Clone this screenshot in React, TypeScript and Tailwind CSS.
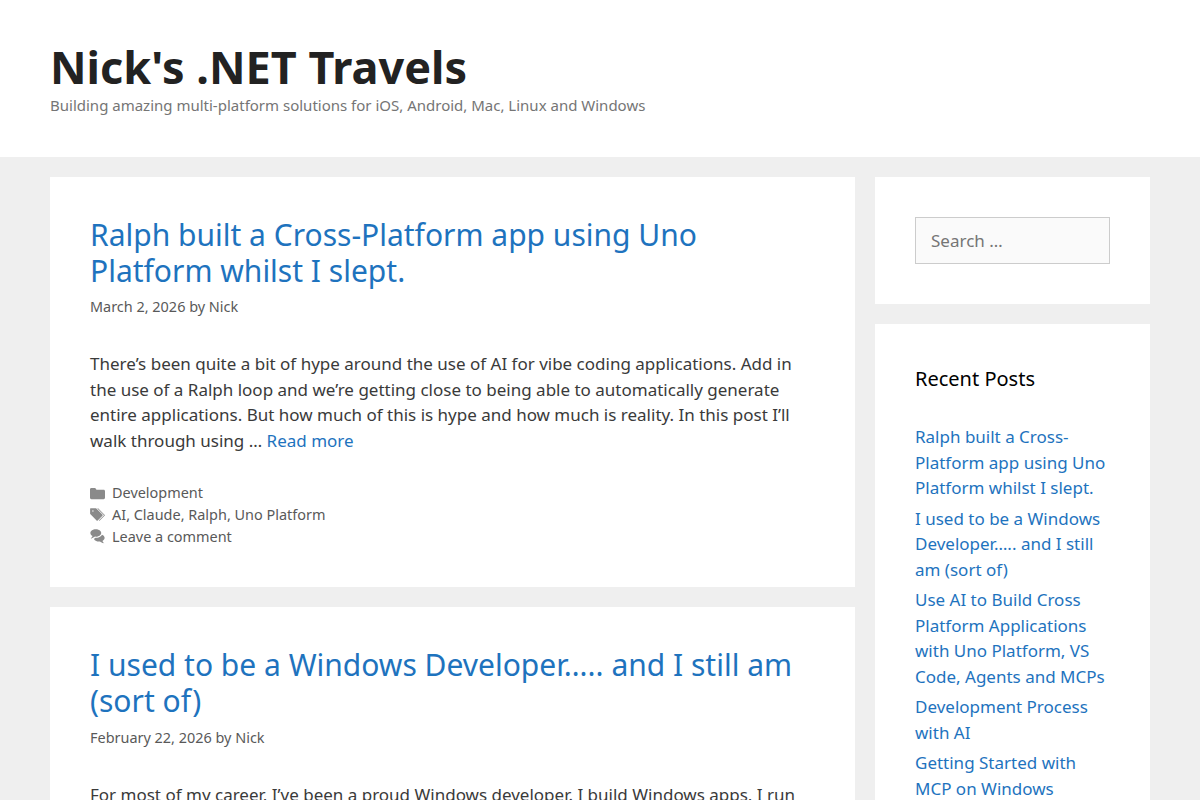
const recentPosts = [
  "Ralph built a Cross-Platform app using Uno Platform whilst I slept.",
  "I used to be a Windows Developer….. and I still am (sort of)",
  "Use AI to Build Cross Platform Applications with Uno Platform, VS Code, Agents and MCPs",
  "Development Process with AI",
  "Getting Started with MCP on Windows",
];

const icons: Record<string, string[]> = {
  folder: [
    "M0 112c0-26.51 21.49-48 48-48h110.014a48 48 0 0143.592 27.907l12.349 26.791A16 16 0 00228.486 128H464c26.51 0 48 21.49 48 48v224c0 26.51-21.49 48-48 48H48c-26.51 0-48-21.49-48-48V112z",
  ],
  tags: [
    "M20 39.5c-8.836 0-16 7.163-16 16v176c0 4.243 1.686 8.313 4.687 11.314l224 224c6.248 6.248 16.378 6.248 22.626 0l176-176c6.244-6.244 6.25-16.364.013-22.615l-223.5-224A15.999 15.999 0 00196.5 39.5H20zm56 96c0-13.255 10.745-24 24-24s24 10.745 24 24-10.745 24-24 24-24-10.745-24-24z",
    "M259.515 43.015c4.686-4.687 12.284-4.687 16.97 0l228 228c4.686 4.686 4.686 12.284 0 16.97l-180 180c-4.686 4.687-12.284 4.687-16.97 0-4.686-4.686-4.686-12.284 0-16.97L479.029 279.5 259.515 59.985c-4.686-4.686-4.686-12.284 0-16.97z",
  ],
  comments: [
    "M132.838 329.973a435.298 435.298 0 0016.769-9.004c13.363-7.574 26.587-16.142 37.419-25.507 7.544.597 15.27.925 23.098.925 54.905 0 105.634-15.311 143.285-41.28 23.728-16.365 43.115-37.692 54.155-62.645 54.739 22.205 91.498 63.272 91.498 110.286 0 42.186-29.558 79.498-75.09 102.828 23.46 49.216 75.09 101.709 75.09 101.709s-115.837-38.35-154.424-78.46c-9.956 1.12-20.297 1.758-30.793 1.758-88.727 0-162.927-43.071-181.007-100.61z",
    "M383.371 132.502c0 70.603-82.961 127.787-185.216 127.787-10.496 0-20.837-.639-30.793-1.757-38.587 40.093-154.424 78.429-154.424 78.429s51.63-52.472 75.09-101.67c-45.532-23.321-75.09-60.619-75.09-102.79C12.938 61.9 95.9 4.716 198.155 4.716 300.41 4.715 383.37 61.9 383.37 132.502z",
  ],
};

function MetaRow({ icon, links }: { icon: string; links: string[] }) {
  return (
    <div className="h-[21.675px]">
      <svg
        viewBox="0 0 512 512"
        fill="currentColor"
        className="inline-block size-[15px] mr-[7px] align-[-0.16em] opacity-70"
      >
        {icons[icon].map((d) => (
          <path key={d} d={d} fillRule="evenodd" />
        ))}
      </svg>
      {links.map((link, i) => (
        <span key={link}>
          {i > 0 && ", "}
          <a href="#">{link}</a>
        </span>
      ))}
    </div>
  );
}

type PostProps = {
  title: string;
  date: string;
  children: React.ReactNode;
  footer?: React.ReactNode;
};

function Post({ title, date, children, footer }: PostProps) {
  return (
    <article className="bg-white p-10">
      <h2 className="text-[30px] leading-[1.2] text-[#1e73be]">
        <a href="#">{title}</a>
      </h2>
      <div className="mt-[7.225px] text-[14.45px] leading-[1.5] text-[#595959]">
        {date} by <a href="#">Nick</a>
      </div>
      <p className="mt-[34px]">{children}</p>
      {footer && (
        <footer className="mt-[28.9px] text-[14.45px] leading-[1.5] text-[#595959]">{footer}</footer>
      )}
    </article>
  );
}

export default function App() {
  return (
    <div className="h-screen overflow-hidden bg-[#efefef] font-['Noto_Sans',sans-serif] text-[17px] leading-[1.5] text-[#3a3a3a] antialiased">
      <header className="bg-white px-[50px] py-10">
        <h1 className="text-[45px] leading-[1.2] font-bold tracking-[0.03px] text-[#222222]">
          <a href="#">Nick&apos;s .NET Travels</a>
        </h1>
        <p className="text-[15px] leading-[1.5] text-[#757575]">
          Building amazing multi-platform solutions for iOS, Android, Mac, Linux and Windows
        </p>
      </header>

      <div className="flex items-start gap-5 px-[50px] pt-5">
        <main className="flex w-[805px] shrink-0 flex-col gap-5">
          <Post
            title="Ralph built a Cross-Platform app using Uno Platform whilst I slept."
            date="March 2, 2026"
            footer={
              <>
                <MetaRow icon="folder" links={["Development"]} />
                <MetaRow icon="tags" links={["AI", "Claude", "Ralph", "Uno Platform"]} />
                <MetaRow icon="comments" links={["Leave a comment"]} />
              </>
            }
          >
            There’s been quite a bit of hype around the use of AI for vibe coding applications. Add in the
            use of a Ralph loop and we’re getting close to being able to automatically generate entire
            applications. But how much of this is hype and how much is reality. In this post I’ll walk
            through using …{" "}
            <a href="#" className="text-[#1e73be]">
              Read more
            </a>
          </Post>

          <Post title="I used to be a Windows Developer….. and I still am (sort of)" date="February 22, 2026">
            For most of my career, I’ve been a proud Windows developer. I build Windows apps, I run
          </Post>
        </main>

        <aside className="flex flex-1 flex-col gap-5">
          <div className="bg-white p-10">
            <input
              type="search"
              placeholder="Search …"
              className="block h-[47.5px] w-full border border-[#cccccc] bg-[#fafafa] px-[15px] py-[10px] text-[#666666] placeholder:text-[#757575]"
            />
          </div>

          <div className="bg-white p-10">
            <h2 className="mb-[30px] text-[20px] leading-[1.5] text-black">Recent Posts</h2>
            <ul className="flex flex-col gap-[5px]">
              {recentPosts.map((post) => (
                <li key={post}>
                  <a href="#" className="text-[#1e73be]">
                    {post}
                  </a>
                </li>
              ))}
            </ul>
          </div>
        </aside>
      </div>
    </div>
  );
}
